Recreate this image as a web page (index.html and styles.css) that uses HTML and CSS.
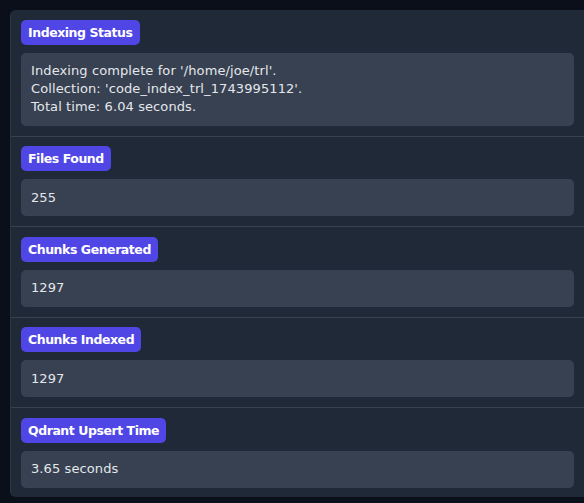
FILE: index.html
```html
<!DOCTYPE html>
<html>
<head>
<meta charset="utf-8">
<link rel="stylesheet" href="styles.css">
</head>
<body>
<div class="panel">
  <div class="section">
    <span class="badge">Indexing Status</span>
    <div class="value">Indexing complete for '/home/joe/trl'.<br>Collection: 'code_index_trl_1743995112'.<br>Total time: 6.04 seconds.</div>
  </div>
  <div class="section">
    <span class="badge">Files Found</span>
    <div class="value">255</div>
  </div>
  <div class="section">
    <span class="badge">Chunks Generated</span>
    <div class="value">1297</div>
  </div>
  <div class="section">
    <span class="badge">Chunks Indexed</span>
    <div class="value">1297</div>
  </div>
  <div class="section last">
    <span class="badge">Qdrant Upsert Time</span>
    <div class="value">3.65 seconds</div>
  </div>
</div>
</body>
</html>
```
FILE: styles.css
```css
html, body {
  margin: 0;
  background: #0b0f19;
}
body {
  padding: 10px 0 0 10px;
  font-family: "DejaVu Sans", sans-serif;
  font-size: 13px;
}
.panel {
  width: 574px;
  box-sizing: border-box;
  background: #1f2937;
  border-left: 1px solid #2b3544;
  border-radius: 6px 0 0 6px;
  display: flex;
  flex-direction: column;
}
.section {
  padding: 9.5px 10px 10px 10px;
  border-bottom: 1px solid #374151;
  display: flex;
  flex-direction: column;
  align-items: flex-start;
  gap: 8px;
}
.section.last {
  border-bottom: none;
  padding-bottom: 9px;
}
.badge {
  background: #4f46e5;
  color: #ffffff;
  font-weight: bold;
  font-size: 12.5px;
  letter-spacing: -0.45px;
  height: 25px;
  line-height: 25px;
  padding: 0 7px;
  border-radius: 5px;
}
.value {
  align-self: stretch;
  background: #374151;
  color: #e5e7eb;
  border-radius: 5px;
  padding: 9.5px 10px;
  line-height: 18px;
  letter-spacing: 0.1px;
}
```
